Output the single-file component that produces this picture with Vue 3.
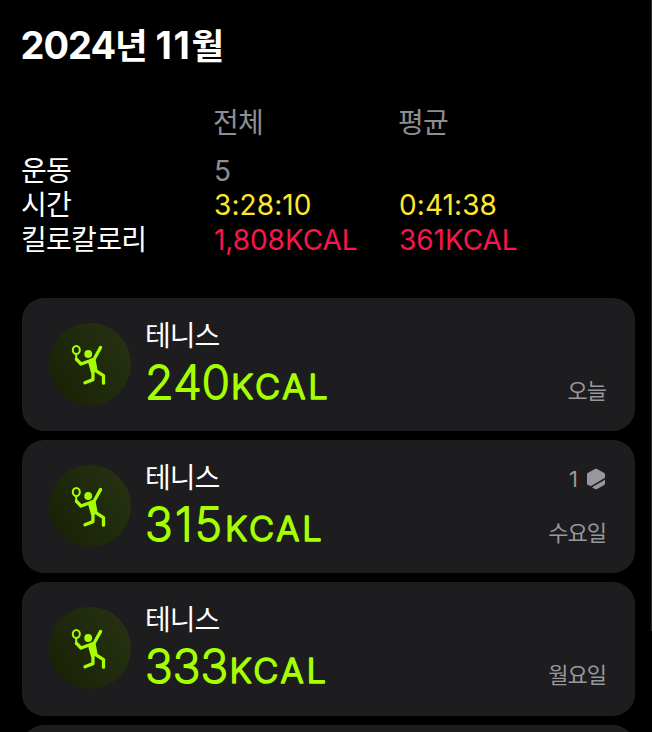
<script setup>
const totals = [
  { label: '운동', total: '5', average: '', tone: 'muted' },
  { label: '시간', total: '3:28:10', average: '0:41:38', tone: 'time' },
  { label: '킬로칼로리', total: '1,808KCAL', average: '361KCAL', tone: 'energy' },
];

const workouts = [
  { id: 1, name: '테니스', calories: 240, day: '오늘', awards: 0 },
  { id: 2, name: '테니스', calories: 315, day: '수요일', awards: 1 },
  { id: 3, name: '테니스', calories: 333, day: '월요일', awards: 0 },
];

// the digit 1 is narrow, so numbers with it get looser spacing
const hasNarrowDigit = (value) => String(value).includes('1');
</script>

<template>
  <main class="screen">
    <h1 class="title">2024<span class="hangul">년 </span><span class="month">11</span><span class="hangul">월</span></h1>

    <section class="summary">
      <div class="row head">
        <span></span>
        <span>전체</span>
        <span>평균</span>
      </div>
      <div v-for="item in totals" :key="item.label" class="row" :class="item.tone">
        <span class="label">{{ item.label }}</span>
        <span>{{ item.total }}</span>
        <span>{{ item.average }}</span>
      </div>
    </section>

    <section class="list">
      <article v-for="workout in workouts" :key="workout.id" class="card">
        <div class="badge">
          <svg class="player" viewBox="0 0 90 90">
            <ellipse class="line racket" cx="31.3" cy="31" rx="3.5" ry="4" />
            <path class="line handle" d="M31.2 36v5" />
            <circle cx="43.2" cy="35" r="3.9" />
            <path class="line limb" d="M31.4 40.2 36 45l8.2-3 5-2 6.4-11.6" />
            <path class="torso" d="M43.8 42.2 49.6 40.5 51.4 50.2 47 53.6z" />
            <path class="line limb" d="M49.5 50.8l9 5.8v7.6M48.1 51l-.2 9.6-7.9 3.2" />
          </svg>
        </div>
        <div class="info">
          <h2 class="name">{{ workout.name }}</h2>
          <svg class="calories" width="230" height="64">
            <text x="0" y="46">
              <tspan class="amount" :class="{ loose: hasNarrowDigit(workout.calories) }">{{ workout.calories }}</tspan><tspan class="unit" dx="1">KCAL</tspan>
            </text>
          </svg>
        </div>
        <div class="meta">
          <div class="awards">
            <template v-if="workout.awards">
              <span>{{ workout.awards }}</span>
              <svg class="hexagon" viewBox="0 0 20 22">
                <path d="M9 .9q1-.6 2 0l7.3 4.1q.7.4.7 1.3v3.5L5.2 17.9 1.7 16.9q-.7-.4-.7-1.3V6.3q0-.9.7-1.3z" />
                <path d="M19 11.7v3.9q0 .9-.7 1.3L11 21q-1 .6-2 0l-3-1.8z" />
              </svg>
            </template>
          </div>
          <span class="day">{{ workout.day }}</span>
        </div>
      </article>
      <div class="card"></div>
    </section>
    <span class="edge"></span>
  </main>
</template>

<style>
body {
  margin: 0;
  background: #000;
}
</style>

<style scoped>
.screen {
  position: relative;
  box-sizing: border-box;
  height: 732px;
  padding: 20px 17.5px 0 21.5px;
  overflow: hidden;
  background: #000;
  color: #fff;
  font-family: Inter, "Noto Sans CJK KR", sans-serif;
}

.edge {
  position: absolute;
  top: 0;
  right: 0;
  width: 1px;
  height: 631px;
  background: #2b2d2b;
}

.title {
  height: 50px;
  margin: 0 0 0 -1px;
  font-size: 38px;
  font-weight: 700;
  line-height: 50px;
  letter-spacing: -1px;
  white-space: nowrap;
}

.hangul {
  font-size: 35.5px;
  letter-spacing: -0.4px;
}

.month {
  letter-spacing: 1.7px;
}

.summary {
  padding-top: 36px;
  font-size: 28px;
}

.row {
  display: grid;
  grid-template-columns: 192.5px 185px 1fr;
  height: 34.3px;
  line-height: 35px;
}

.head {
  height: 48px;
  color: #8e8d93;
  letter-spacing: -0.7px;
  text-indent: -1px;
}

.label {
  color: #fff;
  letter-spacing: -0.7px;
  text-indent: -0.5px;
}

.muted {
  color: #8e8d93;
}

.time {
  color: #ffe62e;
  letter-spacing: 0.1px;
}

.energy {
  color: #fa1450;
  letter-spacing: -0.05px;
}

.list {
  display: flex;
  flex-direction: column;
  gap: 9px;
  padding-top: 41px;
}

.card {
  display: flex;
  flex: none;
  box-sizing: border-box;
  height: 133.3px;
  padding: 21px 28.5px 0 27.5px;
  border-radius: 22px;
  background: #1d1d1f;
}

.badge {
  width: 82px;
  height: 82px;
  margin-top: 4px;
  border-radius: 50%;
  background: linear-gradient(60deg, #182004, #273313);
}

.player {
  display: block;
  width: 90px;
  height: 90px;
  margin: -4px;
  fill: #a5ff00;
}

.line {
  fill: none;
  stroke: #a5ff00;
  stroke-linecap: round;
  stroke-linejoin: round;
}

.racket {
  stroke-width: 2;
}

.handle {
  stroke-width: 2;
}

.limb {
  stroke-width: 3.3;
}

.torso {
  stroke: #a5ff00;
  stroke-width: 2;
  stroke-linejoin: round;
}

.info {
  flex: 1;
  margin-left: 15px;
}

.name {
  margin: 0;
  font-size: 28px;
  font-weight: 400;
  line-height: 35px;
  letter-spacing: -1px;
  text-indent: -1px;
}

.calories {
  display: block;
  margin: -1px 0 0 -1px;
  overflow: visible;
  fill: #a5ff00;
  stroke: #a5ff00;
  stroke-width: 2px;
  stroke-linejoin: round;
}

.amount {
  font-size: 46.5px;
  font-weight: 200;
  letter-spacing: 0.2px;
}

.amount.loose {
  letter-spacing: 2.3px;
}

.unit {
  font-size: 34.5px;
  font-weight: 300;
  letter-spacing: 2.7px;
  stroke-width: 1.6px;
}

.meta {
  display: flex;
  flex-direction: column;
  align-items: flex-end;
  color: #98979d;
  font-size: 22px;
}

.awards {
  display: flex;
  align-items: center;
  gap: 8px;
  height: 36px;
}

.hexagon {
  width: 20px;
  height: 22px;
  fill: #98979d;
}

.day {
  margin-top: 19px;
  line-height: 34px;
  letter-spacing: -1px;
}
</style>
